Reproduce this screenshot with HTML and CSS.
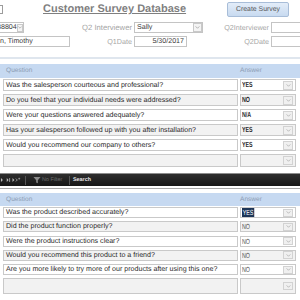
FILE: index.html
```html
<!DOCTYPE html>
<html>
<head>
<meta charset="utf-8">
<link rel="stylesheet" href="styles.css">
</head>
<body>
<div class="header">
  <div class="titlebar">
    <div class="stub"></div>
    <h1 class="title">Customer Survey Database</h1>
    <button class="btn">Create Survey</button>
  </div>
  <div class="fields">
    <div class="box combo c-id"><span class="val">88804</span><span class="dd small"><svg viewBox="0 0 6 4" width="4" height="3"><path d="M0.5 0.5 L3 3 L5.5 0.5" fill="none" stroke="#888" stroke-width="0.8"/></svg></span></div>
    <div class="lbl lbl-wide">Q2 Interviewer</div>
    <div class="box combo c-int"><span class="val">Sally</span><span class="dd"><svg viewBox="0 0 6 4" width="5" height="3"><path d="M0.5 0.5 L3 3 L5.5 0.5" fill="none" stroke="#888" stroke-width="0.8"/></svg></span></div>
    <div class="lbl">Q2Interviewer</div>
    <div class="box c-right"></div>
    <div class="box c-name"><span class="val">n, Timothy</span></div>
    <div class="lbl">Q1Date</div>
    <div class="box c-date"><span class="val">5/30/2017</span></div>
    <div class="lbl">Q2Date</div>
    <div class="box c-right"></div>
  </div>
</div>
<div class="rule"></div>

<section class="sub sub1">
  <div class="head"><span class="hq">Question</span><span class="ha">Answer</span></div>
  <div class="rows">
    <div class="row"><div class="q">Was the salesperson courteous and professional?</div><div class="a"><span class="av"><span class="cap">YES</span></span><span class="dd"><svg viewBox="0 0 6 4" width="5" height="3"><path d="M0.5 0.5 L3 3 L5.5 0.5" fill="none" stroke="#999" stroke-width="0.8"/></svg></span></div></div>
    <div class="row alt"><div class="q">Do you feel that your individual needs were addressed?</div><div class="a"><span class="av"><span class="cap">NO</span></span><span class="dd"><svg viewBox="0 0 6 4" width="5" height="3"><path d="M0.5 0.5 L3 3 L5.5 0.5" fill="none" stroke="#999" stroke-width="0.8"/></svg></span></div></div>
    <div class="row"><div class="q">Were your questions answered adequately?</div><div class="a"><span class="av"><span class="cap">N/A</span></span><span class="dd"><svg viewBox="0 0 6 4" width="5" height="3"><path d="M0.5 0.5 L3 3 L5.5 0.5" fill="none" stroke="#999" stroke-width="0.8"/></svg></span></div></div>
    <div class="row alt"><div class="q">Has your salesperson followed up with you after installation?</div><div class="a"><span class="av"><span class="cap">YES</span></span><span class="dd"><svg viewBox="0 0 6 4" width="5" height="3"><path d="M0.5 0.5 L3 3 L5.5 0.5" fill="none" stroke="#999" stroke-width="0.8"/></svg></span></div></div>
    <div class="row"><div class="q">Would you recommend our company to others?</div><div class="a"><span class="av"><span class="cap">YES</span></span><span class="dd"><svg viewBox="0 0 6 4" width="5" height="3"><path d="M0.5 0.5 L3 3 L5.5 0.5" fill="none" stroke="#999" stroke-width="0.8"/></svg></span></div></div>
    <div class="row alt blank"><div class="q"></div><div class="a"><span class="av"></span><span class="dd"><svg viewBox="0 0 6 4" width="5" height="3"><path d="M0.5 0.5 L3 3 L5.5 0.5" fill="none" stroke="#999" stroke-width="0.8"/></svg></span></div></div>
  </div>
</section>

<div class="navline"></div>
<div class="nav">
  <span class="navbtns">
    <svg viewBox="0 0 26 8" width="26" height="8">
      <path d="M1 2 L3 4 L1 6Z" fill="#bbb"/>
      <path d="M7 2 L9 4 L7 6Z" fill="#bbb"/>
      <path d="M10 2 V6" stroke="#bbb" stroke-width="0.8"/>
      <path d="M13 2 L15 4 L13 6Z" fill="#bbb"/>
      <path d="M16.5 2.5 L18 4 L16.5 5.5" fill="none" stroke="#bbb" stroke-width="0.8"/>
      <path d="M19 2.6 h2 M20 1.6 v2" stroke="#bbb" stroke-width="0.6"/>
    </svg>
  </span>
  <span class="sep"></span>
  <span class="filter"><svg viewBox="0 0 8 8" width="8" height="8"><path d="M0.5 1 H7.5 L4.8 4.2 V7.3 L3.2 6.4 V4.2Z" fill="#8a8a8a"/></svg><span class="nf">No Filter</span></span>
  <span class="sep"></span>
  <span class="search">Search</span>
</div>
<div class="navunder"></div>

<section class="sub sub2">
  <div class="head"><span class="hq">Question</span><span class="ha">Answer</span></div>
  <div class="rows">
    <div class="row"><div class="q">Was the product described accurately?</div><div class="a"><span class="av"><span class="cap sel">YES</span></span><span class="dd"><svg viewBox="0 0 6 4" width="5" height="3"><path d="M0.5 0.5 L3 3 L5.5 0.5" fill="none" stroke="#999" stroke-width="0.8"/></svg></span></div></div>
    <div class="row alt"><div class="q">Did the product function properly?</div><div class="a"><span class="av"><span class="cap">NO</span></span><span class="dd"><svg viewBox="0 0 6 4" width="5" height="3"><path d="M0.5 0.5 L3 3 L5.5 0.5" fill="none" stroke="#999" stroke-width="0.8"/></svg></span></div></div>
    <div class="row"><div class="q">Were the product instructions clear?</div><div class="a"><span class="av"><span class="cap">NO</span></span><span class="dd"><svg viewBox="0 0 6 4" width="5" height="3"><path d="M0.5 0.5 L3 3 L5.5 0.5" fill="none" stroke="#999" stroke-width="0.8"/></svg></span></div></div>
    <div class="row alt"><div class="q">Would you recommend this product to a friend?</div><div class="a"><span class="av"><span class="cap">NO</span></span><span class="dd"><svg viewBox="0 0 6 4" width="5" height="3"><path d="M0.5 0.5 L3 3 L5.5 0.5" fill="none" stroke="#999" stroke-width="0.8"/></svg></span></div></div>
    <div class="row"><div class="q">Are you more likely to try more of our products after using this one?</div><div class="a"><span class="av"><span class="cap">NO</span></span><span class="dd"><svg viewBox="0 0 6 4" width="5" height="3"><path d="M0.5 0.5 L3 3 L5.5 0.5" fill="none" stroke="#999" stroke-width="0.8"/></svg></span></div></div>
    <div class="row alt blank"><div class="q"></div><div class="a"><span class="av"></span><span class="dd"><svg viewBox="0 0 6 4" width="5" height="3"><path d="M0.5 0.5 L3 3 L5.5 0.5" fill="none" stroke="#999" stroke-width="0.8"/></svg></span></div></div>
  </div>
</section>
</body>
</html>
```
FILE: styles.css
```css
* { box-sizing: border-box; margin: 0; padding: 0; }
html, body { width: 300px; height: 300px; overflow: hidden; background: #fff; }
body { font-family: "Liberation Sans", Arial, sans-serif; color: #333; text-rendering: geometricPrecision; }

.header { height: 57px; }
.titlebar { display: flex; align-items: flex-start; height: 20px; }
.stub { width: 20px; height: 9px; margin-left: -17px; margin-top: 5px; border: 1px solid #9c9c9c; background: #fff; flex: none; }
.title { font-size: 11px; font-weight: 700; color: #7f7f7f; text-decoration: underline; line-height: 16px; margin-left: 40px; margin-top: 1px; white-space: nowrap; }
.btn { margin-left: auto; margin-right: 11px; margin-top: 2px; width: 62px; height: 15px; border: 1px solid #a8bdd8; border-radius: 2px; background: linear-gradient(#e3edf9, #c8daf0); font-family: "Liberation Sans", Arial, sans-serif; font-size: 6.9px; color: #555; text-rendering: geometricPrecision; }

.fields { display: grid; grid-template-columns: 76px 56px 73px 64px 31px; grid-template-rows: 11px 11px; row-gap: 3px; margin-top: 2px; }
.lbl { font-size: 7.2px; color: #a6a6a6; text-align: right; line-height: 11px; white-space: nowrap; }
.lbl-wide { font-size: 7.7px; }
.box { border: 1px solid #c4c4c4; background: #fff; font-size: 7.1px; color: #3a3a3a; line-height: 9px; white-space: nowrap; overflow: hidden; display: flex; align-items: center; }
.box .val { padding: 0 2px; }
.c-id { width: 26px; margin-left: -2px; }
.c-id .val { padding: 0; margin-left: -2px; }
.c-int { width: 69px; margin-left: 2px; }
.c-right { margin-left: 2px; width: 32px; }
.c-name { width: 71px; margin-left: -1px; }
.c-name .val { padding: 0; }
.c-date { width: 53px; margin-left: 2px; justify-content: flex-end; }
.combo .dd { margin-left: auto; }
.dd { width: 9px; height: 9px; border: 1px solid #c9c9c9; background: #f4f4f4; display: flex; align-items: center; justify-content: center; flex: none; }
.dd.small { width: 6px; height: 8px; margin-right: 1px; }

.rule { height: 2px; background: #dfe6ee; }

.sub1 { margin-top: 5px; }
.head { display: flex; height: 14px; background: #c6d9f1; font-size: 6.6px; color: #8d9db4; line-height: 14px; }
.hq { padding-left: 6px; width: 240px; }
.rows { padding-top: 1px; }
.row { display: flex; height: 12px; margin-bottom: 3px; }
.q { margin-left: 3px; width: 235px; border: 1px solid #c9c9c9; background: #fff; font-size: 7.1px; line-height: 10px; padding-left: 2px; color: #2a2a2a; white-space: nowrap; overflow: hidden; }
.a { margin-left: 2px; width: 56px; border: 1px solid #c9c9c9; background: #fff; display: flex; align-items: center; padding-right: 2px; }
.av { flex: 1; font-size: 7.4px; line-height: 10px; padding-left: 1px; color: #2a2a2a; font-weight: 700; display: flex; align-items: center; }
.cap { display: inline-block; transform: scaleX(0.72); transform-origin: left center; }
.row.alt .q, .row.alt .a { background: #f2f2f2; }
.row .dd { width: 10px; height: 9px; background: #f0f0f0; border-color: #d2d2d2; }
.sub1 .row.blank { height: 13px; }

.navline { margin-top: 6px; height: 1px; background: #8c8c8c; }
.nav { height: 12px; background: linear-gradient(#2e2e2e, #161616); display: flex; align-items: center; font-size: 5.4px; color: #ddd; }
.navbtns { display: flex; align-items: center; width: 25px; overflow: hidden; }
.sep { width: 1px; height: 9px; background: #555; }
.filter { display: flex; align-items: center; gap: 1px; width: 43px; padding-left: 7px; }
.nf { color: #6e6e6e; }
.search { padding-left: 3px; color: #e6e6e6; font-weight: 700; }
.navunder { margin-top: 2px; height: 1px; background: #a8a8a8; }

.sub2 { margin-top: 4px; }
.sub2 .head { height: 13px; line-height: 13px; }
.sub2 .rows { padding-top: 1px; }
.sub2 .row { height: 11px; margin-bottom: 3.25px; }
.sub2 .q, .sub2 .av { line-height: 9px; }
.sub2 .q { padding-left: 2px; }
.sub2 .av { font-weight: 400; color: #555; }
.sub2 .row .dd { height: 8px; }
.sub2 .row.blank { height: 16px; }
.sel { background: #1d3557; color: #fff; padding: 0 1px; }
```
